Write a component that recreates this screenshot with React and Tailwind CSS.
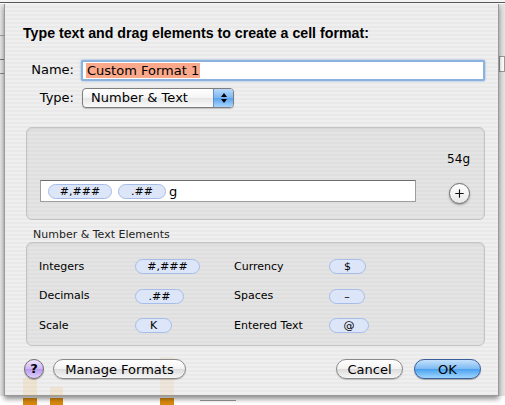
import { Plus } from 'lucide-react'

const ui = { fontFamily: '"DejaVu Sans", "Liberation Sans", sans-serif' }

function Token({ children, w }) {
  return (
    <span className={`inline-flex items-center justify-center h-[15px] rounded-full border border-[#a6bde8] bg-[#dce6f8] text-[11px] text-black leading-none ${w}`}>
      {children}
    </span>
  )
}

function Pill({ children, className = '' }) {
  return (
    <button className={`h-[20px] rounded-full border border-[#8a8a8a] bg-[linear-gradient(#ffffff,#f2f2f2_50%,#dcdcdc_51%,#f6f6f6)] text-[13px] text-black shadow-[0_1px_1px_rgba(0,0,0,0.2)] ${className}`}>
      {children}
    </button>
  )
}

function ElementRow({ label, token, tokenW, label2, token2, token2W }) {
  return (
    <div className="flex items-center h-[29.5px] text-[11px] text-black">
      <span className="w-[96px]">{label}</span>
      <span className="w-[99px] flex"><Token w={tokenW}>{token}</Token></span>
      <span className="w-[95px]">{label2}</span>
      <Token w={token2W}>{token2}</Token>
    </div>
  )
}

export default function App() {
  return (
    <div className="relative w-[505px] h-[405px] overflow-hidden bg-white" style={ui}>
      {/* window behind the sheet */}
      <div className="absolute left-0 top-0 w-[505px] h-[3px] bg-[#f4f4f4] border-b border-[#5a5a5a]" />
      <div className="absolute left-0 top-[4px] w-[4px] h-[392px] bg-[#e6e6e6]">
        <div className="h-[32px] border-b border-[#9aa]" />
        <div className="h-[24px] border-b border-[#777]" />
        <div className="h-[14px] border-b border-[#888]" />
      </div>
      <div className="absolute right-0 top-[4px] w-[6px] h-[392px] bg-[#e2e2e2]">
        <div className="mt-[52px] h-[16px] border border-[#999] bg-white" />
      </div>
      <div className="absolute left-[23px] top-[398px] w-[14px] h-[7px] bg-[#d98a0c]" />
      <div className="absolute left-[50px] top-[398px] w-[13px] h-[7px] bg-[#d98a0c]" />
      <div className="absolute left-[160px] top-[398px] w-[14px] h-[7px] bg-[#d98a0c]" />
      <div className="absolute left-[200px] top-[400px] w-[36px] h-px bg-[#999]" />

      {/* sheet */}
      <div className="absolute left-[4px] top-[4px] w-[495px] h-[392px] border-x border-b border-[#9a9a9a] bg-[repeating-linear-gradient(180deg,#efefef_0px,#efefef_2px,#e9e9e9_2px,#e9e9e9_4px)] shadow-[0_3px_5px_rgba(0,0,0,0.45)]">
        {/* faint bars showing through the sheet */}
        <div className="absolute left-[18px] top-[374px] w-[14px] h-[18px] bg-[#f0a030]/15" />
        <div className="absolute left-[45px] top-[383px] w-[13px] h-[9px] bg-[#f0a030]/15" />
        <div className="absolute left-[155px] top-[353px] w-[14px] h-[39px] bg-[#f0a030]/10" />

        <div className="relative pl-[18px] pt-[21px]">
          <h1 className="text-[14.2px] font-bold leading-[16px] text-black" style={{ fontFamily: '"Liberation Sans", Arial, sans-serif' }}>
            Type text and drag elements to create a cell format:
          </h1>

          <div className="mt-[18px] flex items-center h-[22px]">
            <span className="w-[51px] text-right text-[13px] text-black">Name:</span>
            <div className="ml-[7px] w-[404px] h-[21px] rounded-[2px] border-2 border-[#8cb2e0] bg-white shadow-[0_0_2px_#6fa0dc] flex items-center pl-[3px]">
              <span className="bg-[#fba98a] text-[13px] leading-[15px] text-black px-[1px]">Custom Format 1</span>
            </div>
          </div>

          <div className="mt-[6px] flex items-center h-[22px]">
            <span className="w-[51px] text-right text-[13px] text-black">Type:</span>
            <div className="ml-[8px] w-[152px] h-[20px] rounded-[4px] border border-[#7d7d7d] bg-[linear-gradient(#ffffff,#f4f4f4_50%,#e6e6e6_51%,#fafafa)] flex overflow-hidden shadow-[0_1px_1px_rgba(0,0,0,0.2)]">
              <span className="flex-1 pl-[8px] text-[13px] leading-[18px] text-black">Number &amp; Text</span>
              <span className="w-[20px] border-l border-[#6a8fc4] bg-[linear-gradient(#b7d8fb,#7ab7f3_50%,#5aa3ef_51%,#a7d6ff)] flex flex-col items-center justify-center gap-[2px]">
                <span className="w-0 h-0 border-x-[3px] border-x-transparent border-b-[4px] border-b-black" />
                <span className="w-0 h-0 border-x-[3px] border-x-transparent border-t-[4px] border-t-black" />
              </span>
            </div>
          </div>

          {/* preview group */}
          <div className="mt-[18px] ml-[3px] w-[459px] h-[93px] rounded-[6px] border border-[#c3c3c3] bg-[repeating-linear-gradient(180deg,#e4e4e4_0px,#e4e4e4_2px,#dfdfdf_2px,#dfdfdf_4px)] shadow-[inset_0_1px_2px_rgba(0,0,0,0.08)] relative">
            <div className="absolute right-[14px] top-[22px] text-[12px] text-black">54g</div>
            <div className="absolute left-[13px] top-[52px] w-[376px] h-[22px] bg-white border border-[#9d9d9d] border-t-[#6e6e6e] flex items-center gap-[6px] pl-[7px]">
              <Token w="w-[64px]">#,###</Token>
              <span className="flex items-center">
                <Token w="w-[48px]">.##</Token>
                <span className="ml-[3px] text-[13px] leading-none text-black">g</span>
              </span>
            </div>
            <div className="absolute left-[422px] top-[55px] w-[21px] h-[21px] rounded-full border border-[#6d6d6d] bg-[linear-gradient(#ffffff,#e8e8e8)] shadow-[0_1px_2px_rgba(0,0,0,0.35)] flex items-center justify-center">
              <Plus size={13} strokeWidth={2} color="#111" />
            </div>
          </div>

          <div className="mt-[8px] ml-[10px] text-[11px] leading-[14px] text-[#222]">Number &amp; Text Elements</div>

          {/* elements group */}
          <div className="ml-[3px] w-[459px] h-[104px] rounded-[6px] border border-[#c3c3c3] bg-[repeating-linear-gradient(180deg,#e4e4e4_0px,#e4e4e4_2px,#dfdfdf_2px,#dfdfdf_4px)] shadow-[inset_0_1px_2px_rgba(0,0,0,0.08)] pl-[12px] pt-[9px]">
            <ElementRow label="Integers" token="#,###" tokenW="w-[65px]" label2="Currency" token2="$" token2W="w-[37px]" />
            <ElementRow label="Decimals" token=".##" tokenW="w-[49px]" label2="Spaces" token2="–" token2W="w-[36px]" />
            <ElementRow label="Scale" token="K" tokenW="w-[37px]" label2="Entered Text" token2="@" token2W="w-[40px]" />
          </div>

          {/* buttons */}
          <div className="mt-[13px] flex items-center">
            <span className="ml-[1px] w-[20px] h-[20px] rounded-full border border-[#6f6f6f] bg-[linear-gradient(#f1e6ff,#cdb4f3_50%,#b89aea_51%,#e0cffc)] text-[13px] font-bold text-black flex items-center justify-center shadow-[0_1px_1px_rgba(0,0,0,0.3)]">?</span>
            <Pill className="ml-[9px] w-[133px]">Manage Formats</Pill>
            <Pill className="ml-[150px] w-[67px]">Cancel</Pill>
            <button className="ml-[11px] w-[67px] h-[20px] rounded-full border border-[#3c5f99] bg-[linear-gradient(#c4e1fb,#7cbaf2_50%,#4aa0ee_51%,#9fd6ff)] text-[13px] text-black shadow-[0_1px_1px_rgba(0,0,0,0.3)]">OK</button>
          </div>
        </div>
      </div>
    </div>
  )
}
